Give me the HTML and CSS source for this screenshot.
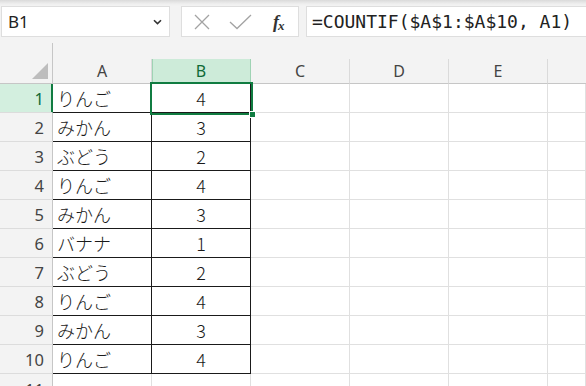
FILE: index.html
```html
<!DOCTYPE html>
<html lang="ja">
<head>
<meta charset="utf-8">
<title>COUNTIF</title>
<link rel="stylesheet" href="styles.css">
</head>
<body>
<div class="app">
  <div class="fbar">
    <div class="namebox">
      <span class="name">B1</span>
      <svg class="chev" width="9" height="6" viewBox="0 0 9 6"><path d="M1 1.2 L4.5 4.6 L8 1.2" fill="none" stroke="#333" stroke-width="1.6"/></svg>
    </div>
    <div class="fxbox">
      <svg class="ico" width="18" height="16" viewBox="0 0 18 16"><path d="M2 1 L16 15 M16 1 L2 15" stroke="#a3a3a3" stroke-width="1.3" fill="none"/></svg>
      <svg class="ico" width="24" height="16" viewBox="0 0 24 16"><path d="M1 8 L8 14.5 L22 1" stroke="#a3a3a3" stroke-width="1.3" fill="none"/></svg>
      <span class="fx"><i>f</i><i class="sub">x</i></span>
    </div>
    <div class="formula">=COUNTIF($A$1:$A$10, A1)</div>
  </div>

  <div class="sheet">
    <div class="corner"><span class="tri"></span></div>
    <div class="gap"></div>

    <div class="ch">A</div>
    <div class="ch ch-sel">B</div>
    <div class="ch">C</div>
    <div class="ch">D</div>
    <div class="ch">E</div>
    <div class="ch ch-last"></div>

    <div class="rh rh-sel">1</div><div class="c d">りんご</div><div class="c d n">4</div><div class="c"></div><div class="c"></div><div class="c"></div><div class="c"></div>
    <div class="rh">2</div><div class="c d">みかん</div><div class="c d n">3</div><div class="c"></div><div class="c"></div><div class="c"></div><div class="c"></div>
    <div class="rh">3</div><div class="c d">ぶどう</div><div class="c d n">2</div><div class="c"></div><div class="c"></div><div class="c"></div><div class="c"></div>
    <div class="rh">4</div><div class="c d">りんご</div><div class="c d n">4</div><div class="c"></div><div class="c"></div><div class="c"></div><div class="c"></div>
    <div class="rh">5</div><div class="c d">みかん</div><div class="c d n">3</div><div class="c"></div><div class="c"></div><div class="c"></div><div class="c"></div>
    <div class="rh">6</div><div class="c d">バナナ</div><div class="c d n">1</div><div class="c"></div><div class="c"></div><div class="c"></div><div class="c"></div>
    <div class="rh">7</div><div class="c d">ぶどう</div><div class="c d n">2</div><div class="c"></div><div class="c"></div><div class="c"></div><div class="c"></div>
    <div class="rh">8</div><div class="c d">りんご</div><div class="c d n">4</div><div class="c"></div><div class="c"></div><div class="c"></div><div class="c"></div>
    <div class="rh">9</div><div class="c d">みかん</div><div class="c d n">3</div><div class="c"></div><div class="c"></div><div class="c"></div><div class="c"></div>
    <div class="rh">10</div><div class="c d">りんご</div><div class="c d n">4</div><div class="c"></div><div class="c"></div><div class="c"></div><div class="c"></div>
    <div class="rh rh-cut">11</div><div class="c"></div><div class="c"></div><div class="c"></div><div class="c"></div><div class="c"></div><div class="c"></div>

    <div class="sel"><span class="handle"></span></div>
  </div>
</div>
</body>
</html>
```

FILE: styles.css
```css
* { box-sizing: border-box; }
html, body { margin: 0; padding: 0; }
body {
  width: 586px;
  height: 386px;
  overflow: hidden;
  background: #f3f3f3;
  font-family: "Noto Sans", "Open Sans", sans-serif;
}
.app { width: 586px; height: 386px; overflow: hidden; }

.fbar {
  height: 43px;
  padding: 6px 0 6px 1px;
  display: flex;
  align-items: stretch;
  background: linear-gradient(#dadada 0, #efefef 4px, #f3f3f3 6px);
}
.namebox {
  width: 169px;
  background: #fff;
  border: 1px solid #dedede;
  display: flex;
  align-items: center;
  justify-content: space-between;
  padding: 0 7px 0 6px;
}
.name { font-size: 17px; color: #222; }
.chev { margin-top: 1px; }

.fxbox {
  margin-left: 11px;
  width: 118px;
  background: #fff;
  border: 1px solid #dedede;
  display: flex;
  align-items: center;
  padding-left: 11px;
}
.fxbox .ico:first-child { margin-right: 18px; }
.fxbox .ico:nth-child(2) { margin-right: 20px; }
.fx {
  font-family: "Liberation Serif", "DejaVu Serif", serif;
  font-size: 18px;
  color: #333;
  font-weight: bold;
  line-height: 1;
}
.fx .sub { font-size: 13px; position: relative; top: 2px; margin-left: -1px; }

.formula {
  margin-left: 7px;
  flex: 1;
  background: #fff;
  border: 1px solid #dedede;
  border-right: none;
  display: flex;
  align-items: center;
  padding-left: 5px;
  font-family: "DejaVu Sans Mono", "Liberation Mono", monospace;
  font-size: 18px;
  color: #222;
  white-space: nowrap;
}

.sheet {
  position: relative;
  display: grid;
  grid-template-columns: 53px repeat(5, 99px) 1fr;
  grid-template-rows: 16px 25px repeat(11, 29px);
  background: #f3f3f3;
}
.corner {
  grid-row: 1 / span 2;
  grid-column: 1;
  border-right: 1px solid #c6c6c6;
  border-bottom: 1px solid #c6c6c6;
  position: relative;
}
.tri {
  position: absolute;
  right: 4px;
  bottom: 4px;
  width: 16px;
  height: 16px;
  background: #bdbdbd;
  clip-path: polygon(100% 0, 100% 100%, 0 100%);
}
.gap { grid-row: 1; grid-column: 2 / -1; }

.ch {
  border-right: 1px solid #dadada;
  border-bottom: 1px solid #c6c6c6;
  display: flex;
  align-items: center;
  justify-content: center;
  font-size: 16px;
  color: #444;
}
.ch-sel {
  background: #cdebd9;
  color: #0f6a37;
  border-right-color: #9fd3b4;
  box-shadow: inset 1px 0 #9fd3b4;
  border-bottom-color: #107c41;
}
.ch-last { border-right: none; }

.rh {
  background: #f3f3f3;
  border-right: 1px solid #c6c6c6;
  border-bottom: 1px solid #dcdcdc;
  display: flex;
  align-items: center;
  justify-content: flex-end;
  padding-right: 8px;
  font-size: 16.5px;
  color: #444;
}
.rh-cut { align-items: flex-start; padding-top: 4px; }
.rh-sel {
  background: #d3efdf;
  color: #0f6a37;
  border-right: 1px solid #107c41;
  box-shadow: inset -1px 0 #107c41;
}

.c {
  background: #fff;
  border-right: 1px solid #e0e0e0;
  border-bottom: 1px solid #e0e0e0;
}
.d {
  border-right-color: #1a1a1a;
  border-bottom-color: #1a1a1a;
  display: flex;
  align-items: center;
  padding-left: 4px;
  font-family: "Noto Sans CJK JP", "Noto Sans", sans-serif;
  font-weight: 300;
  font-size: 18px;
  color: #1a1a1a;
}
.n { justify-content: center; padding-left: 0; }

.sel {
  position: absolute;
  left: 150px;
  top: 39px;
  width: 103px;
  height: 33px;
  border: 2px solid #107c41;
}
.handle {
  position: absolute;
  right: -5px;
  bottom: -5px;
  width: 7px;
  height: 7px;
  background: #107c41;
  border: 1px solid #fff;
}
```
